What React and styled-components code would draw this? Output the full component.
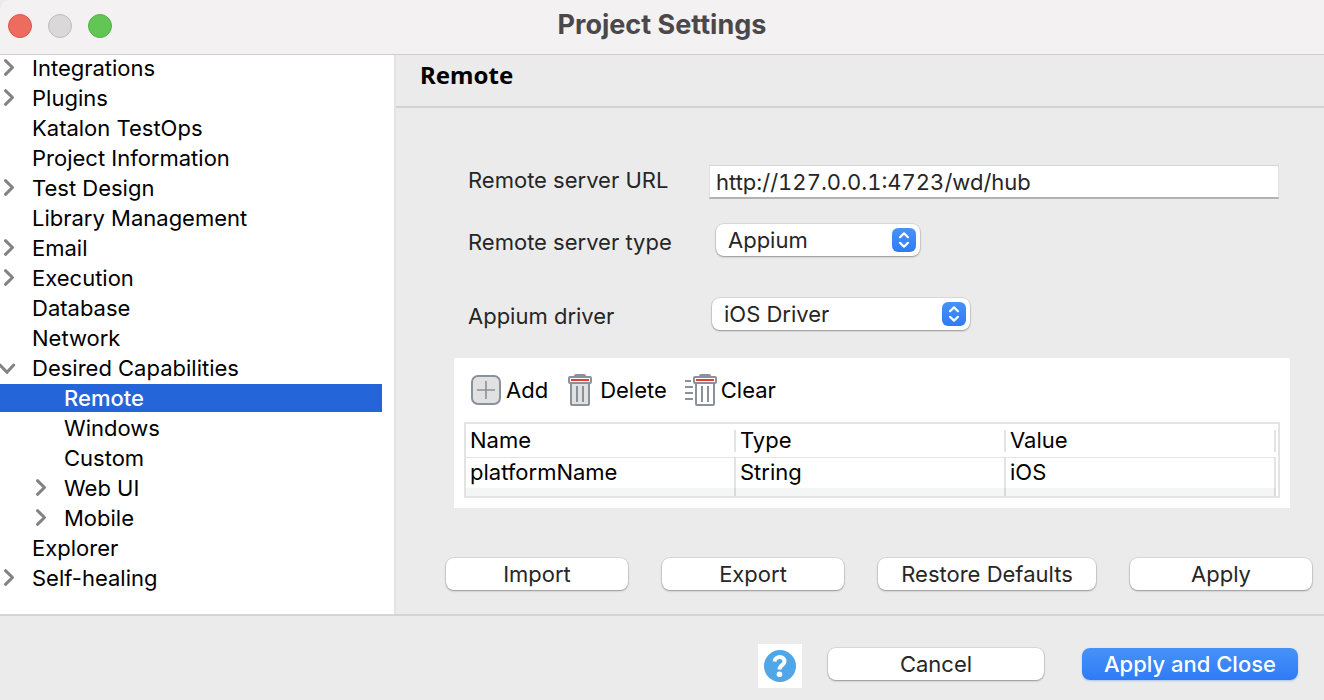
import React from "react";
import styled, { createGlobalStyle, css } from "styled-components";

const GlobalStyle = createGlobalStyle`
  *, *::before, *::after { box-sizing: border-box; }
  body { margin: 0; background: #ebebeb; }
  body, button, input, select { font-family: Inter, "Liberation Sans", sans-serif; font-size: 22px; line-height: 28px; }
`;

const Window = styled.div`
  display: flex;
  flex-direction: column;
  min-height: 100vh;
  background: #ebebeb;
  color: #000;
`;

const TitleBar = styled.header`
  display: grid;
  grid-template-columns: 1fr auto 1fr;
  align-items: center;
  height: 54px;
  padding: 0 8px 2px;
  background: #f4f1f3;
  box-shadow: 0 1px 0 #cfcdce;
  position: relative;
  border-top-left-radius: 10px;
`;

const TrafficLights = styled.div`
  display: flex;
  gap: 16px;
`;

const Light = styled.button`
  width: 24px;
  height: 24px;
  padding: 0;
  border-radius: 50%;
  background: ${(p) => p.$fill};
  border: 1px solid ${(p) => p.$edge};
`;

const Title = styled.h1`
  margin: 0;
  padding-bottom: 2px;
  font-size: 27px;
  line-height: 32px;
  font-weight: 700;
  color: #4a484a;
`;

const Body = styled.div`
  display: flex;
  flex: 1;
`;

const Sidebar = styled.nav`
  flex: 0 0 396px;
  padding-right: 12px;
  background: #fff;
  border-right: 2px solid #e3e3e3;
`;

const Tree = styled.ul`
  display: flex;
  flex-direction: column;
  gap: 2px;
  margin: 0;
  padding: 0;
  list-style: none;
`;

const TreeRow = styled.li`
  display: flex;
  align-items: center;
  height: 28px;
  padding-left: ${(p) => (p.$nested ? 32 : 0)}px;
  ${(p) =>
    p.$selected &&
    css`
      background: #2465da;
      color: #fff;
      font-weight: 500;
    `}
`;

const Twisty = styled.span`
  display: flex;
  flex: 0 0 32px;

  svg {
    fill: none;
    stroke: #828282;
    stroke-width: 3;
    stroke-linecap: round;
    stroke-linejoin: round;
  }
`;

const TreeLink = styled.a`
  color: inherit;
  text-decoration: none;
  white-space: nowrap;
`;

const Page = styled.main`
  display: flex;
  flex: 1;
  flex-direction: column;
  min-width: 0;
`;

const PageHeading = styled.h2`
  margin: 0;
  height: 54px;
  padding: 5px 24px;
  border-bottom: 2px solid #d3d3d3;
  font-family: "Noto Sans", sans-serif;
  font-size: 24px;
  line-height: 32px;
  font-weight: 700;
`;

const Form = styled.form`
  display: flex;
  flex: 1;
  flex-direction: column;
`;

const Fields = styled.div`
  display: grid;
  grid-template-columns: 241px 1fr;
  row-gap: 25px;
  padding: 57px 45px 28px 72px;
  color: #262626;
`;

const Label = styled.label`
  padding-top: ${(p) => p.$top || 4}px;
  line-height: 28px;
`;

const TextInput = styled.input`
  height: 34px;
  width: 100%;
  padding: 0 6px;
  border: 1px solid #d6d6d6;
  border-bottom: 2px solid #b2b2b2;
  border-left-color: #e0e0e0;
  border-right-color: #e0e0e0;
  background: #fff;
  color: #262626;
  font-variant-numeric: tabular-nums;
  outline: none;
`;

const SelectCell = styled.div`
  padding-left: ${(p) => p.$indent}px;
  padding-bottom: ${(p) => p.$gapBelow || 0}px;
`;

const SelectBox = styled.div`
  position: relative;
  width: ${(p) => p.$width}px;
  height: 32px;

  svg {
    position: absolute;
    top: 4px;
    right: 4px;
    pointer-events: none;
  }
`;

const raised = css`
  border: 0;
  border-radius: 8px;
  background: #fff;
  color: #262626;
  box-shadow: 0 0 0 1px rgba(0, 0, 0, 0.07), 0 1px 2px rgba(0, 0, 0, 0.32);
`;

const Select = styled.select`
  ${raised}
  appearance: none;
  display: block;
  width: 100%;
  height: 32px;
  padding: 0 36px 0 12px;
`;

const Capabilities = styled.section`
  margin: 0 34px 0 58px;
  padding: 14px 10px 10px;
  background: #fff;
`;

const Toolbar = styled.div`
  display: flex;
  gap: 18px;
  height: 50px;
  padding-left: 6px;
`;

const ToolButton = styled.button`
  display: flex;
  align-items: center;
  gap: 4px;
  height: 36px;
  padding: 0;
  border: 0;
  background: none;
  color: #000;
`;

const TableFrame = styled.div`
  padding-right: 2px;
  border: 2px solid #e3e3e3;
  background: #fff;
`;

const Table = styled.table`
  width: 100%;
  table-layout: fixed;
  border-collapse: separate;
  border-spacing: 0;
`;

const HeadCell = styled.th`
  height: 34px;
  padding: 6px 0 5px;
  border-bottom: 1px solid #e3e3e3;
  font-weight: 400;
  text-align: left;
`;

const HeadLabel = styled.div`
  padding: 0 0 2px 4px;
  border-right: 2px solid #e3e3e3;
  line-height: 20px;
`;

const Cell = styled.td`
  height: ${(p) => (p.$stripe ? 8 : 30)}px;
  padding: ${(p) => (p.$stripe ? "0" : "0 0 2px 4px")};
  border-right: 2px solid ${(p) => (p.$stripe ? "#d9dbdb" : "#e3e3e3")};
  background: ${(p) => (p.$stripe ? "#f4f5f5" : "#fff")};
`;

const PageActions = styled.div`
  display: flex;
  justify-content: flex-end;
  gap: 34px;
  margin-top: auto;
  padding: 0 12px 24px;
`;

const PushButton = styled.button`
  ${raised}
  width: ${(p) => p.$width}px;
  height: 32px;
  padding: 0;
  white-space: nowrap;
  ${(p) =>
    p.$primary &&
    css`
      background: linear-gradient(#4792f8, #2f7bf6);
      color: #fff;
      font-weight: 500;
      box-shadow: 0 1px 2px rgba(47, 123, 246, 0.35);
    `}
`;

const Footer = styled.footer`
  display: flex;
  justify-content: flex-end;
  align-items: flex-start;
  gap: 38px;
  height: 86px;
  padding: 32px 26px 0;
  border-top: 2px solid #d3d3d3;
`;

const HelpGroup = styled.div`
  display: flex;
  gap: 26px;
  align-items: flex-start;
`;

const HelpButton = styled.button`
  display: flex;
  align-items: center;
  justify-content: center;
  width: 44px;
  height: 44px;
  margin-top: -4px;
  padding: 0;
  border: 0;
  background: #fff;
`;

const tree = [
  { label: "Integrations", state: "closed" },
  { label: "Plugins", state: "closed" },
  { label: "Katalon TestOps" },
  { label: "Project Information" },
  { label: "Test Design", state: "closed" },
  { label: "Library Management" },
  { label: "Email", state: "closed" },
  { label: "Execution", state: "closed" },
  { label: "Database" },
  { label: "Network" },
  { label: "Desired Capabilities", state: "open" },
  { label: "Remote", nested: true, selected: true },
  { label: "Windows", nested: true },
  { label: "Custom", nested: true },
  { label: "Web UI", nested: true, state: "closed" },
  { label: "Mobile", nested: true, state: "closed" },
  { label: "Explorer" },
  { label: "Self-healing", state: "closed" },
];

const columns = ["Name", "Type", "Value"];
const capability = ["platformName", "String", "iOS"];

function Arrow({ state }) {
  return (
    <svg width="18" height="20" viewBox="0 0 18 20" aria-hidden="true">
      <path d={state === "open" ? "M0 7 7 14.300 13.700 7" : "M5.500 2.700 12.500 9.500 5.500 16.300"} />
    </svg>
  );
}

function Stepper() {
  return (
    <svg width="24" height="24" viewBox="0 0 24 24" aria-hidden="true">
      <defs>
        <linearGradient id="stepper" x1="0" y1="0" x2="0" y2="1">
          <stop offset="0" stopColor="#4792f8" />
          <stop offset="1" stopColor="#2f7bf6" />
        </linearGradient>
      </defs>
      <rect width="24" height="24" rx="6" fill="url(#stepper)" />
      <path
        d="M8 9.200 12 5.400 16 9.200M8 14.800 12 18.600 16 14.800"
        fill="none"
        stroke="#fff"
        strokeWidth="2.200"
        strokeLinecap="round"
        strokeLinejoin="round"
      />
    </svg>
  );
}

function AddIcon() {
  return (
    <svg width="32" height="32" viewBox="0 0 32 32" aria-hidden="true">
      <rect x="2" y="2" width="28" height="28" rx="6" fill="#e2e1e1" stroke="#8b919c" strokeWidth="2" />
      <path d="M16 7V25M7 16H25" stroke="#8b919c" strokeWidth="1.600" />
    </svg>
  );
}

function Bin({ body }) {
  return (
    <>
      <path d="M6 2Q6 0 8 0H16Q18 0 18 2Z" fill="#8b919c" />
      <rect x="3" y="8" width="18" height="23" rx="1" fill={body} stroke="#8b919c" strokeWidth="2" />
      <rect x="1" y="3" width="22" height="6" rx="1" fill="#fff" stroke="#8b919c" strokeWidth="2" />
      <path d="M3 6H21" stroke="#ee3a2c" strokeWidth="2" />
      <path d="M9 12V28M15 12V28" stroke="#8b919c" strokeWidth="2" />
    </>
  );
}

function DeleteIcon() {
  return (
    <svg width="30" height="32" viewBox="-2 0 30 32" aria-hidden="true">
      <Bin body="#e2e1e1" />
    </svg>
  );
}

function ClearIcon() {
  return (
    <svg width="32" height="32" viewBox="0 0 32 32" aria-hidden="true">
      <path d="M0 7H6M0 13H8M0 19H8M0 25H8" stroke="#8b919c" strokeWidth="2" />
      <g transform="translate(8 0)">
        <Bin body="#fff" />
      </g>
    </svg>
  );
}

function HelpIcon() {
  return (
    <svg width="32" height="32" viewBox="0 0 32 32" aria-hidden="true">
      <circle cx="16" cy="16" r="16" fill="#51a6e8" />
      <path
        d="M10.500 11.500C11 5.800 20.500 5.500 20.500 11.500C20.500 15.500 15.500 14.800 15.500 19.500"
        fill="none"
        stroke="#fff"
        strokeWidth="4"
      />
      <circle cx="15.500" cy="24.300" r="2.800" fill="#fff" />
    </svg>
  );
}

function PopUp({ id, width, options }) {
  return (
    <SelectBox $width={width}>
      <Select id={id} defaultValue={options[0]}>
        {options.map((o) => (
          <option key={o}>{o}</option>
        ))}
      </Select>
      <Stepper />
    </SelectBox>
  );
}

export default function App() {
  return (
    <Window>
      <GlobalStyle />
      <TitleBar>
        <TrafficLights>
          <Light aria-label="Close" $fill="#ed6b5f" $edge="#d9574b" />
          <Light aria-label="Minimize" $fill="#dad8d9" $edge="#bdbbbc" />
          <Light aria-label="Zoom" $fill="#62c655" $edge="#53b046" />
        </TrafficLights>
        <Title>Project Settings</Title>
      </TitleBar>

      <Body>
        <Sidebar>
          <Tree>
            {tree.map((item) => (
              <TreeRow key={item.label} $nested={item.nested} $selected={item.selected}>
                <Twisty>{item.state && <Arrow state={item.state} />}</Twisty>
                <TreeLink href="#">{item.label}</TreeLink>
              </TreeRow>
            ))}
          </Tree>
        </Sidebar>

        <Page>
          <PageHeading>Remote</PageHeading>
          <Form onSubmit={(e) => e.preventDefault()}>
            <Fields>
              <Label htmlFor="url" $top={1}>Remote server URL</Label>
              <TextInput id="url" defaultValue="http://127.0.0.1:4723/wd/hub" />
              <Label htmlFor="type">Remote server type</Label>
              <SelectCell $indent={7} $gapBelow={17}>
                <PopUp id="type" width={204} options={["Appium", "Selenium"]} />
              </SelectCell>
              <Label htmlFor="driver">Appium driver</Label>
              <SelectCell $indent={3}>
                <PopUp id="driver" width={258} options={["iOS Driver", "Android Driver"]} />
              </SelectCell>
            </Fields>

            <Capabilities>
              <Toolbar>
                <ToolButton type="button"><AddIcon />Add</ToolButton>
                <ToolButton type="button"><DeleteIcon />Delete</ToolButton>
                <ToolButton type="button"><ClearIcon />Clear</ToolButton>
              </Toolbar>
              <TableFrame>
                <Table>
                  <thead>
                    <tr>
                      {columns.map((c) => (
                        <HeadCell key={c} scope="col"><HeadLabel>{c}</HeadLabel></HeadCell>
                      ))}
                    </tr>
                  </thead>
                  <tbody>
                    <tr>
                      {capability.map((c) => (
                        <Cell key={c}>{c}</Cell>
                      ))}
                    </tr>
                    <tr>
                      {columns.map((c) => (
                        <Cell key={c} $stripe />
                      ))}
                    </tr>
                  </tbody>
                </Table>
              </TableFrame>
            </Capabilities>

            <PageActions>
              <PushButton type="button" $width={182}>Import</PushButton>
              <PushButton type="button" $width={182}>Export</PushButton>
              <PushButton type="button" $width={218}>Restore Defaults</PushButton>
              <PushButton type="button" $width={182}>Apply</PushButton>
            </PageActions>
          </Form>
        </Page>
      </Body>

      <Footer>
        <HelpGroup>
          <HelpButton type="button" aria-label="Help"><HelpIcon /></HelpButton>
          <PushButton type="button" $width={216}>Cancel</PushButton>
        </HelpGroup>
        <PushButton type="button" $width={216} $primary>Apply and Close</PushButton>
      </Footer>
    </Window>
  );
}
